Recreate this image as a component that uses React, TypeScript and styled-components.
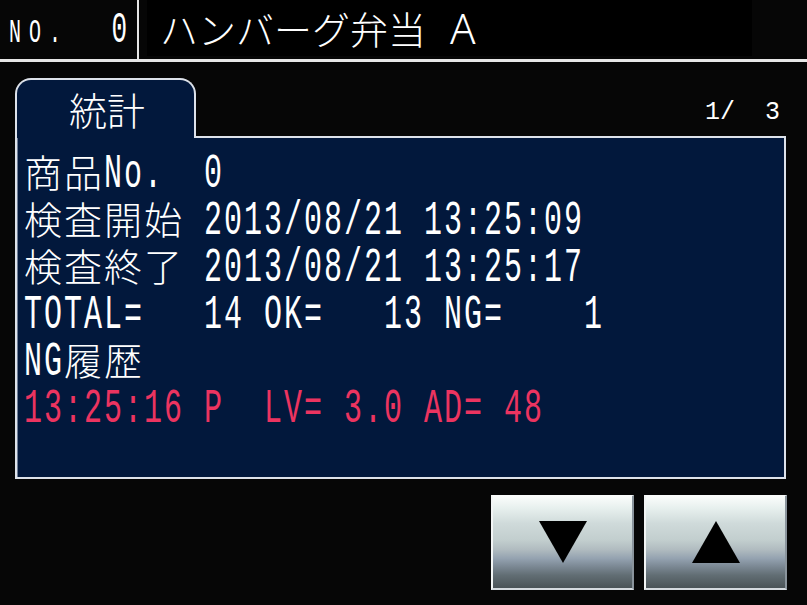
import styled, { createGlobalStyle } from 'styled-components';

const GlobalStyle = createGlobalStyle`
	html, body {
		margin: 0;
		padding: 0;
		background: #060606;
	}
	body {
		font-family: "Liberation Mono", "Noto Sans CJK JP", monospace;
	}
`;

const Screen = styled.div`
	width: 807px;
	height: 605px;
	background: #060606;
	color: #fff;
	display: flex;
	flex-direction: column;
	overflow: hidden;
`;

const TopBar = styled.header`
	height: 59px;
	display: flex;
	border-bottom: 3px solid #e6e6e6;
`;

const NoCell = styled.div`
	width: 139px;
	box-sizing: border-box;
	display: flex;
	justify-content: space-between;
	align-items: baseline;
	padding: 26px 10px 0 9px;
	border-right: 2px solid #e6e6e6;
`;

const TitleBox = styled.div`
	width: 605px;
	height: 56px;
	margin-left: 8px;
	background: #000;
	display: flex;
	align-items: center;
	padding-left: 13px;
	box-sizing: border-box;
	font-family: "Noto Sans CJK JP", sans-serif;
	font-weight: 300;
	font-size: 38px;
	line-height: 1;
	white-space: pre;
`;

const TitleSuffix = styled.span`
	display: inline-block;
	margin-left: 24px;
	font-family: "Noto Sans", sans-serif;
	font-size: 42px;
	font-weight: 300;
	line-height: 42px;
`;

const Body = styled.main`
	display: flex;
	flex-direction: column;
	padding: 16px 21px 0 15px;
`;

const TabRow = styled.div`
	height: 58px;
	display: flex;
	align-items: flex-end;
`;

const Tab = styled.div`
	align-self: stretch;
	width: 181px;
	box-sizing: border-box;
	margin-bottom: -2px;
	position: relative;
	z-index: 1;
	background: #02183c;
	border: 2px solid #dde2ea;
	border-bottom: none;
	border-radius: 16px 16px 0 0;
	display: flex;
	align-items: center;
	justify-content: center;
	padding-left: 3px;
	font-family: "Noto Sans CJK JP", sans-serif;
	font-weight: 300;
	font-size: 38px;
	line-height: 1;
`;

const PageNo = styled.div`
	margin: 0 6px 12px auto;
`;

const Panel = styled.section`
	height: 343px;
	box-sizing: border-box;
	background: #02183c;
	border: 2px solid #dde2ea;
	box-shadow: inset 1px 0 0 #6e7d96;
	padding: 17px 7px 0 7px;
`;

const Line = styled.div<{ $tone?: 'red' }>`
	height: 47px;
	line-height: 47px;
	white-space: pre;
	font-family: "Liberation Mono", monospace;
	font-size: 33.33px;
	color: ${(p) => (p.$tone === 'red' ? '#ec3460' : '#fff')};
`;

/* half-width text: a mono face stretched upright, baseline kept in place */
const Narrow = styled.span<{ $size?: number; $sy?: number; $ls?: number }>`
	display: inline-block;
	white-space: pre;
	font-family: "Liberation Mono", monospace;
	font-size: ${(p) => p.$size ?? 30}px;
	letter-spacing: ${(p) => p.$ls ?? 2}px;
	line-height: 0.75;
	transform: scaleY(${(p) => p.$sy ?? 1.63});
	transform-origin: 50% 85.5%;
`;

const Wide = styled.span`
	display: inline-block;
	font-family: "Noto Sans CJK JP", sans-serif;
	font-size: 38px;
	font-weight: 300;
	letter-spacing: 2px;
	line-height: 32px;
`;

const ButtonRow = styled.div`
	display: flex;
	justify-content: flex-end;
	gap: 10px;
	padding: 16px 20px 0 0;
`;

const NavButton = styled.button`
	width: 143px;
	height: 95px;
	padding: 0;
	display: flex;
	align-items: center;
	justify-content: center;
	border: none;
	border-top: 1px solid #fafcfc;
	border-left: 2px solid #f2f5f5;
	border-bottom: 2px solid #d5dadf;
	border-right: 2px solid #8a949c;
	background: linear-gradient(
		to bottom,
		#fbfdfc 0%,
		#e6efed 14%,
		#cfdada 30%,
		#c2cece 48%,
		#b1bcc0 58%,
		#94a2b0 68%,
		#7d8a96 76%,
		#626e74 86%,
		#4a5357 100%
	);
`;

const CJK = /([\u3000-\u30ff\u4e00-\u9fff\uff00-\uffef]+)/;

const Mixed = ({ text }: { text: string }) => (
	<>
		{text
			.split(CJK)
			.filter(Boolean)
			.map((part, i) =>
				CJK.test(part) ? <Wide key={i}>{part}</Wide> : <Narrow key={i}>{part}</Narrow>,
			)}
	</>
);

const Triangle = ({ dir }: { dir: 'up' | 'down' }) => (
	<svg width="48" height="42" viewBox="0 0 48 42">
		{dir === 'down' ? (
			<polygon points="0,0 48,0 24,42" fill="#000" />
		) : (
			<polygon points="24,0 48,42 0,42" fill="#000" />
		)}
	</svg>
);

const lines = [
	'商品No.  0',
	'検査開始 2013/08/21 13:25:09',
	'検査終了 2013/08/21 13:25:17',
	'TOTAL=   14 OK=   13 NG=    1',
	'NG履歴',
];

const App = (): React.ReactElement => {
	return (
		<Screen>
			<GlobalStyle />
			<TopBar>
				<NoCell>
					<Narrow $size={20} $ls={8} $sy={1.65}>
						NO.
					</Narrow>
					<Narrow $size={26} $ls={0} $sy={1.7}>
						0
					</Narrow>
				</NoCell>
				<TitleBox>
					ハンバーグ弁当<TitleSuffix>A</TitleSuffix>
				</TitleBox>
			</TopBar>
			<Body>
				<TabRow>
					<Tab>統計</Tab>
					<PageNo>
						<Narrow $size={25} $ls={0} $sy={1.05}>
							1/  3
						</Narrow>
					</PageNo>
				</TabRow>
				<Panel>
					{lines.map((l) => (
						<Line key={l}>
							<Mixed text={l} />
						</Line>
					))}
					<Line $tone="red">
						<Mixed text="13:25:16 P  LV= 3.0 AD= 48" />
					</Line>
				</Panel>
			</Body>
			<ButtonRow>
				<NavButton>
					<Triangle dir="down" />
				</NavButton>
				<NavButton>
					<Triangle dir="up" />
				</NavButton>
			</ButtonRow>
		</Screen>
	);
};

export default App;
